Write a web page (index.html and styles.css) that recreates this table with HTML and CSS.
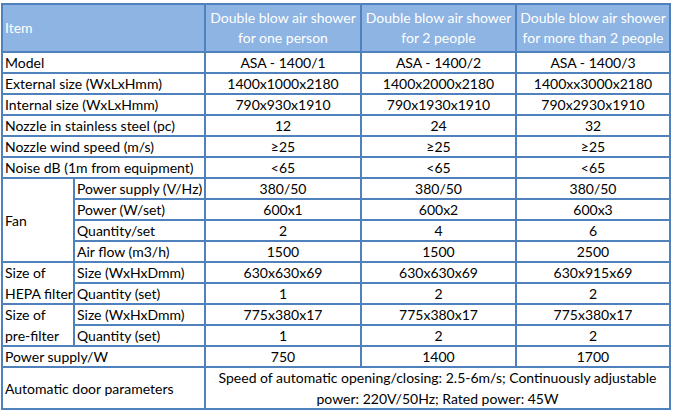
FILE: index.html
```html
<!DOCTYPE html>
<html>
<head>
<meta charset="utf-8">
<link rel="stylesheet" href="styles.css">
</head>
<body>
<div class="sheet">
  <div class="grid">
    <div class="cell head span2 left">Item</div>
    <div class="cell head">Double blow air shower<br>for one person</div>
    <div class="cell head">Double blow air shower<br>for 2 people</div>
    <div class="cell head">Double blow air shower<br>for more than 2 people</div>

    <div class="cell span2 left">Model</div>
    <div class="cell">ASA - 1400/1</div>
    <div class="cell">ASA - 1400/2</div>
    <div class="cell">ASA - 1400/3</div>

    <div class="cell span2 left">External size (WxLxHmm)</div>
    <div class="cell">1400x1000x2180</div>
    <div class="cell">1400x2000x2180</div>
    <div class="cell">1400xx3000x2180</div>

    <div class="cell span2 left">Internal size (WxLxHmm)</div>
    <div class="cell">790x930x1910</div>
    <div class="cell">790x1930x1910</div>
    <div class="cell">790x2930x1910</div>

    <div class="cell span2 left">Nozzle in stainless steel (pc)</div>
    <div class="cell">12</div>
    <div class="cell">24</div>
    <div class="cell">32</div>

    <div class="cell span2 left">Nozzle wind speed (m/s)</div>
    <div class="cell">≥25</div>
    <div class="cell">≥25</div>
    <div class="cell">≥25</div>

    <div class="cell span2 left">Noise dB (1m from equipment)</div>
    <div class="cell">&lt;65</div>
    <div class="cell">&lt;65</div>
    <div class="cell">&lt;65</div>

    <div class="cell left rows4">Fan</div>
    <div class="cell left">Power supply (V/Hz)</div>
    <div class="cell">380/50</div>
    <div class="cell">380/50</div>
    <div class="cell">380/50</div>

    <div class="cell left">Power (W/set)</div>
    <div class="cell">600x1</div>
    <div class="cell">600x2</div>
    <div class="cell">600x3</div>

    <div class="cell left">Quantity/set</div>
    <div class="cell">2</div>
    <div class="cell">4</div>
    <div class="cell">6</div>

    <div class="cell left">Air flow (m3/h)</div>
    <div class="cell">1500</div>
    <div class="cell">1500</div>
    <div class="cell">2500</div>

    <div class="cell left rows2 multi">Size of<br>HEPA filter</div>
    <div class="cell left">Size (WxHxDmm)</div>
    <div class="cell">630x630x69</div>
    <div class="cell">630x630x69</div>
    <div class="cell">630x915x69</div>

    <div class="cell left">Quantity (set)</div>
    <div class="cell">1</div>
    <div class="cell">2</div>
    <div class="cell">2</div>

    <div class="cell left rows2 multi">Size of<br>pre-filter</div>
    <div class="cell left">Size (WxHxDmm)</div>
    <div class="cell">775x380x17</div>
    <div class="cell">775x380x17</div>
    <div class="cell">775x380x17</div>

    <div class="cell left">Quantity (set)</div>
    <div class="cell">1</div>
    <div class="cell">2</div>
    <div class="cell">2</div>

    <div class="cell span2 left">Power supply/W</div>
    <div class="cell">750</div>
    <div class="cell">1400</div>
    <div class="cell">1700</div>

    <div class="cell span2 left">Automatic door parameters</div>
    <div class="cell span3 multi">Speed of automatic opening/closing: 2.5-6m/s; Continuously adjustable<br>power: 220V/50Hz; Rated power: 45W</div>
  </div>
</div>
</body>
</html>
```

FILE: styles.css
```css
html, body {
  margin: 0;
  padding: 0;
  background: #ffffff;
}

.sheet {
  padding: 3px 0 0 1px;
}

.grid {
  display: grid;
  width: 666px;
  grid-template-columns: 70px 129px 154px 153px 152px;
  grid-template-rows: 46px repeat(15, 19px) 40px;
  gap: 2px;
  padding: 2px;
  background: #4f81bd;
  font-family: Lato, "Open Sans", sans-serif;
  font-size: 14px;
  color: #000000;
}

.cell {
  background: #ffffff;
  display: flex;
  align-items: center;
  justify-content: center;
  text-align: center;
  line-height: 21px;
  white-space: nowrap;
  overflow: hidden;
}

.left {
  justify-content: flex-start;
  text-align: left;
  padding-left: 2px;
}

.head {
  background: #8db4e2;
  color: #ffffff;
  line-height: 20px;
}

.span2 { grid-column: span 2; }
.span3 { grid-column: span 3; }
.rows4 { grid-row: span 4; }
.rows2 { grid-row: span 2; }
```
